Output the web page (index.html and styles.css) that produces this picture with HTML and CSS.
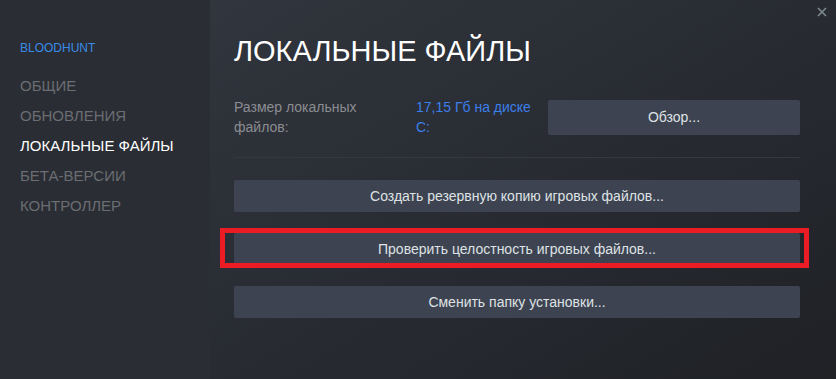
FILE: index.html
```html
<!DOCTYPE html>
<html lang="ru">
<head>
  <meta charset="UTF-8" />
  <title>Свойства — BLOODHUNT</title>
  <link rel="stylesheet" href="styles.css">
</head>
<body>
  <div class="dialog">
    <aside class="sidebar">
      <div class="game-name">BLOODHUNT</div>
      <nav class="nav">
        <div class="nav-item">ОБЩИЕ</div>
        <div class="nav-item">ОБНОВЛЕНИЯ</div>
        <div class="nav-item active">ЛОКАЛЬНЫЕ ФАЙЛЫ</div>
        <div class="nav-item">БЕТА-ВЕРСИИ</div>
        <div class="nav-item">КОНТРОЛЛЕР</div>
      </nav>
    </aside>

    <main class="content">
      <button class="close" title="Закрыть">
        <svg width="10" height="10" viewBox="0 0 10 10">
          <path d="M1 1 L9 9 M9 1 L1 9" stroke="currentColor" stroke-width="1.6" />
        </svg>
      </button>

      <h1 class="title">ЛОКАЛЬНЫЕ ФАЙЛЫ</h1>

      <div class="size-row">
        <div class="size-label">Размер локальных файлов:</div>
        <div class="size-value">17,15 Гб на диске C:</div>
        <button class="btn btn-browse">Обзор...</button>
      </div>

      <div class="divider"></div>

      <div class="actions">
        <button class="btn">Создать резервную копию игровых файлов...</button>
        <div class="highlight-wrap">
          <button class="btn">Проверить целостность игровых файлов...</button>
          <div class="highlight"></div>
        </div>
        <button class="btn">Сменить папку установки...</button>
      </div>
    </main>
  </div>
</body>
</html>
```

FILE: styles.css
```css
:root {
  --sidebar-bg: #2a2d34;
  --text-muted: #6b6d72;
  --label-color: #8b8d92;
  --accent: #3a8be6;
  --link: #3b7fea;
  --btn-bg: #3d4350;
  --btn-text: #dfe2e5;
  --font-family: 'Liberation Sans', Arial, sans-serif;
}

* {
  box-sizing: border-box;
  margin: 0;
  padding: 0;
}

html, body {
  width: 100%;
  height: 100%;
  overflow: hidden;
  font-family: var(--font-family);
  background: var(--sidebar-bg);
}

.dialog {
  display: flex;
  height: 100%;
}

/* Левая колонка */
.sidebar {
  width: 210px;
  flex: 0 0 210px;
  background: var(--sidebar-bg);
  padding: 38px 0 0 20px;
}

.game-name {
  color: var(--accent);
  font-size: 12px;
  line-height: 20px;
  margin-bottom: 13px;
}

.nav-item {
  font-size: 15px;
  line-height: 30px;
  color: var(--text-muted);
}

.nav-item.active {
  color: #ffffff;
}

/* Основная часть */
.content {
  flex: 1;
  position: relative;
  padding: 29px 36px 0 24px;
  background: linear-gradient(to bottom right, #31353d 0%, #272a31 55%, #1f2125 100%);
}

.close {
  position: absolute;
  top: 6px;
  right: 8px;
  width: 12px;
  height: 12px;
  border: none;
  background: none;
  color: #7f8b91;
  display: flex;
  align-items: center;
  justify-content: center;
}

.title {
  font-size: 29px;
  font-weight: 400;
  line-height: 44px;
  color: #ffffff;
  margin-bottom: 24px;
}

.size-row {
  display: grid;
  grid-template-columns: 170px 120px 1fr;
  column-gap: 12px;
  align-items: center;
  font-size: 14px;
  line-height: 20px;
}

.size-label {
  color: var(--label-color);
  max-width: 140px;
}

.size-value {
  color: var(--link);
}

.btn {
  display: block;
  width: 100%;
  height: 32px;
  border: none;
  border-radius: 2px;
  background: var(--btn-bg);
  color: var(--btn-text);
  font-family: var(--font-family);
  font-size: 14px;
  text-align: center;
}

.btn-browse {
  height: 35px;
}

.divider {
  height: 1px;
  background: #353840;
  margin: 20px 0 22px;
}

.actions {
  display: flex;
  flex-direction: column;
  gap: 21px;
}

.highlight-wrap {
  position: relative;
}

/* красная рамка-выделение поверх кнопки */
.highlight {
  position: absolute;
  top: -5px;
  left: -14px;
  right: -9px;
  bottom: -3px;
  border: 5px solid #ec1c24;
  pointer-events: none;
}
```
